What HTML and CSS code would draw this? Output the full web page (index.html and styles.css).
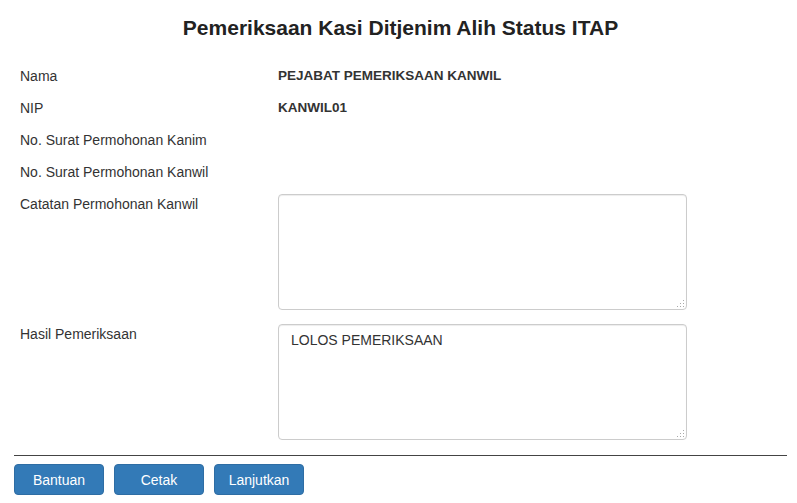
FILE: index.html
```html
<!DOCTYPE html>
<html>
<head>
<meta charset="utf-8">
<link rel="stylesheet" href="styles.css">
</head>
<body>
<div class="page">
  <h1 class="title">Pemeriksaan Kasi Ditjenim Alih Status ITAP</h1>
  <div class="form">
    <div class="row"><div class="label">Nama</div><div class="value">PEJABAT PEMERIKSAAN KANWIL</div></div>
    <div class="row"><div class="label">NIP</div><div class="value">KANWIL01</div></div>
    <div class="row"><div class="label">No. Surat Permohonan Kanim</div><div class="value"></div></div>
    <div class="row"><div class="label">No. Surat Permohonan Kanwil</div><div class="value"></div></div>
    <div class="row row-area"><div class="label">Catatan Permohonan Kanwil</div><div class="area-wrap"><textarea class="area"></textarea><span class="grip"></span></div></div>
    <div class="row row-area last"><div class="label">Hasil Pemeriksaan</div><div class="area-wrap"><textarea class="area">LOLOS PEMERIKSAAN</textarea><span class="grip"></span></div></div>
  </div>
  <hr class="divider">
  <div class="actions">
    <button class="btn">Bantuan</button>
    <button class="btn">Cetak</button>
    <button class="btn">Lanjutkan</button>
  </div>
</div>
</body>
</html>
```
FILE: styles.css
```css
html, body {
  margin: 0;
  padding: 0;
  background: #fff;
}
body {
  font-family: "Liberation Sans", Arial, sans-serif;
  color: #333;
  font-size: 14px;
}
.page {
  padding: 0 10px 0 14px;
}
.title {
  margin: 0;
  padding-top: 16px;
  height: 50px;
  box-sizing: border-box;
  font-size: 21px;
  line-height: 24px;
  font-weight: bold;
  text-align: center;
  color: #222;
}
.form {
  padding: 16px 0 0 6px;
}
.row {
  display: flex;
  margin-bottom: 12px;
  line-height: 20px;
}
.row-area {
  margin-bottom: 14px;
}
.row-area.last {
  margin-bottom: 0;
}
.label {
  width: 258px;
  flex: none;
}
.value {
  font-weight: bold;
  font-size: 13.5px;
}
.area-wrap {
  position: relative;
  width: 409px;
  height: 116px;
}
.area {
  display: block;
  width: 409px;
  height: 116px;
  box-sizing: border-box;
  border: 1px solid #ccc;
  border-radius: 4px;
  padding: 5px 12px;
  margin: 0;
  font-family: "Liberation Sans", Arial, sans-serif;
  font-size: 14px;
  line-height: 20px;
  color: #333;
  resize: none;
  box-shadow: inset 0 1px 1px rgba(0,0,0,.075);
}
.grip {
  position: absolute;
  right: 3px;
  bottom: 3px;
  width: 8px;
  height: 8px;
  background:
    radial-gradient(circle, #aaa 0.9px, transparent 1px) 0 0 / 3px 3px;
  clip-path: polygon(100% 0, 100% 100%, 0 100%);
}
.divider {
  margin: 15px 0 8px 0;
  border: 0;
  border-top: 1px solid #444;
  height: 0;
}
.actions {
  display: flex;
  gap: 10px;
}
.btn {
  width: 90px;
  height: 31px;
  background: #337ab7;
  border: 1px solid #2e6da4;
  border-radius: 4px;
  color: #fff;
  font-family: "Liberation Sans", Arial, sans-serif;
  font-size: 14px;
  padding: 0;
}
```
